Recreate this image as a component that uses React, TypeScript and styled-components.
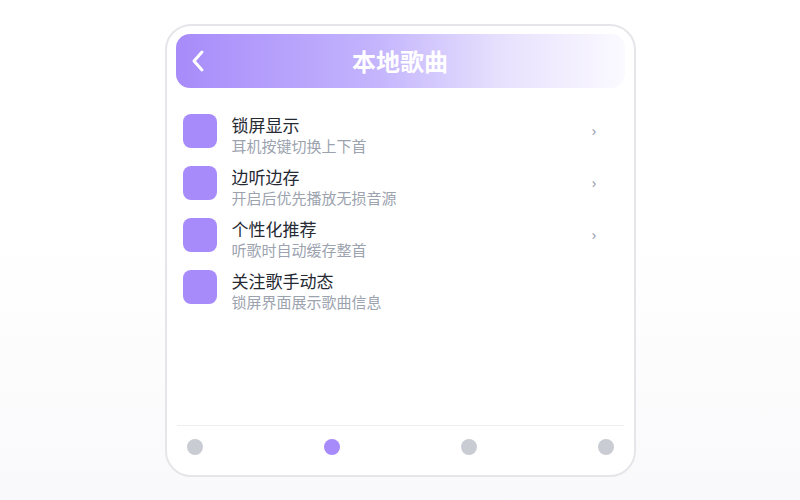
import * as React from "react";
import styled, { createGlobalStyle } from "styled-components";

const GlobalStyle = createGlobalStyle`
	html, body {
		margin: 0;
		padding: 0;
	}

	body {
		font-family: "Noto Sans", "Noto Sans CJK SC", sans-serif;
		background: linear-gradient(to bottom, #ffffff 48%, #f9f9fb 100%);
		min-height: 100vh;
	}
`;

const Stage = styled.div`
	height: 100vh;
	display: flex;
	align-items: center;
	justify-content: center;
`;

const Card = styled.div`
	box-sizing: border-box;
	width: 471px;
	height: 453px;
	padding: 8px 9px 9px;
	border: 2px solid #e6e6ea;
	border-radius: 26px;
	background: #ffffff;
	display: flex;
	flex-direction: column;
`;

const Header = styled.div`
	position: relative;
	height: 54px;
	border-radius: 14px;
	background: linear-gradient(
		90deg,
		#a78bfa 0%,
		#c4b5fd 45%,
		#e7e0fd 72%,
		#fbfaff 100%
	);
	display: flex;
	align-items: center;
	justify-content: center;
`;

const BackButton = styled.button`
	position: absolute;
	left: 14px;
	top: 50%;
	transform: translateY(-50%);
	border: 0;
	padding: 0;
	background: none;
	display: flex;
	cursor: pointer;
`;

const Title = styled.h1`
	margin: 0;
	font-family: "Noto Sans CJK SC", sans-serif;
	font-size: 24px;
	font-weight: 700;
	color: #ffffff;
`;

const List = styled.ul`
	list-style: none;
	margin: 0;
	padding: 26px 28px 0 7px;
	flex: 1;
	display: flex;
	flex-direction: column;
	gap: 18px;
`;

const Row = styled.li`
	display: flex;
	align-items: flex-start;
	height: 34px;
`;

const Thumb = styled.div`
	width: 34px;
	height: 34px;
	border-radius: 8px;
	background: #a78bfa;
	flex-shrink: 0;
`;

const Texts = styled.div`
	margin-left: 15px;
	flex: 1;
	display: flex;
	flex-direction: column;
`;

const ItemTitle = styled.div`
	font-family: "Noto Sans CJK SC", sans-serif;
	font-size: 17px;
	line-height: 22px;
	color: #262a33;
`;

const ItemSub = styled.div`
	font-family: "Noto Sans CJK SC", sans-serif;
	font-size: 15px;
	line-height: 19px;
	color: #9ca3af;
`;

const Arrow = styled.span`
	font-family: "Noto Sans", sans-serif;
	font-size: 15px;
	line-height: 20px;
	color: #9ca3af;
	margin-top: 6px;
`;

const Footer = styled.div`
	border-top: 1px solid #eeeef1;
	margin: 0 1px;
	padding: 13px 10px 11px;
	display: flex;
	justify-content: space-between;
`;

const Dot = styled.span<{ $active?: boolean }>`
	width: 16px;
	height: 16px;
	border-radius: 50%;
	background: ${(p) => (p.$active ? "#a78bfa" : "#c9ccd2")};
`;

const items = [
	{ title: "锁屏显示", sub: "耳机按键切换上下首", arrow: true },
	{ title: "边听边存", sub: "开启后优先播放无损音源", arrow: true },
	{ title: "个性化推荐", sub: "听歌时自动缓存整首", arrow: true },
	{ title: "关注歌手动态", sub: "锁屏界面展示歌曲信息", arrow: false },
];

export default function App() {
	return (
		<>
			<GlobalStyle />
			<Stage>
				<Card>
					<Header>
						<BackButton aria-label="返回">
							<svg width="16" height="24" viewBox="0 0 16 24" fill="none">
								<path
									d="M12 3 L4 12 L12 21"
									stroke="#ffffff"
									strokeWidth="3"
									strokeLinecap="round"
									strokeLinejoin="round"
								/>
							</svg>
						</BackButton>
						<Title>本地歌曲</Title>
					</Header>
					<List>
						{items.map((item) => (
							<Row key={item.title}>
								<Thumb />
								<Texts>
									<ItemTitle>{item.title}</ItemTitle>
									<ItemSub>{item.sub}</ItemSub>
								</Texts>
								{item.arrow && <Arrow>›</Arrow>}
							</Row>
						))}
					</List>
					<Footer>
						<Dot />
						<Dot $active />
						<Dot />
						<Dot />
					</Footer>
				</Card>
			</Stage>
		</>
	);
}
